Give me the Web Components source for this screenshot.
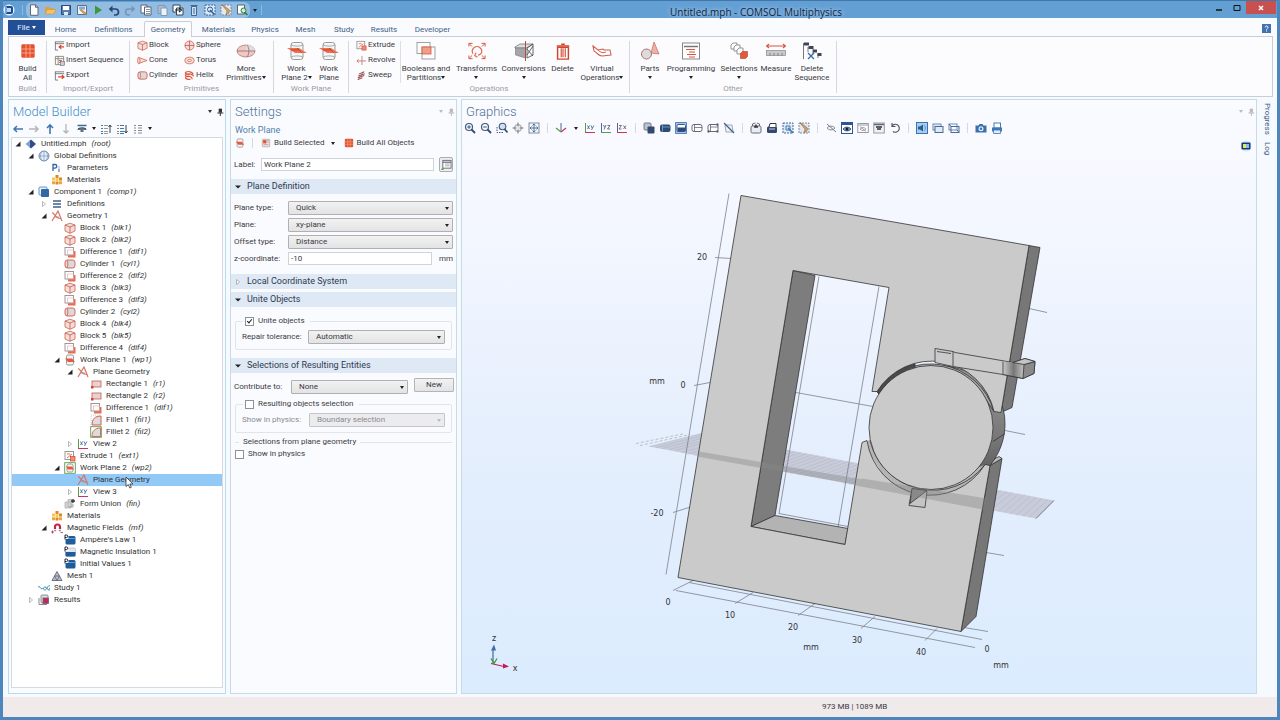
<!DOCTYPE html>
<html lang="en">
<head>
<meta charset="utf-8">
<title>Untitled.mph - COMSOL Multiphysics</title>
<style>
  html, body { height: 100%; }
  body { margin: 0; font: 8px/12px Roboto, "Noto Sans", sans-serif; color: #333; background: #f9fafe; overflow: hidden; }
</style>
</head>
<body>
<app-window></app-window>
<script>
/* ---------- icon library ---------- */
const ICONS = {
  logo: '<circle cx="6" cy="6" r="5.5" fill="#e8f1fb"/><rect x="2" y="2" width="8" height="8" rx="2" fill="#1c4b8c"/><rect x="4" y="4" width="4" height="4" fill="#bcd9f5"/><rect x="2" y="3" width="2" height="6" fill="#6fa6e0"/>',
  logo2: '<circle cx="6" cy="6" r="5.5" fill="#dfe6ef"/><rect x="1.5" y="2.500" width="9" height="7" rx="1" fill="#123a78"/><rect x="3" y="4" width="3" height="4" fill="#e8e35a"/><rect x="6" y="4" width="3" height="4" fill="#7fc3e8"/>',
  newdoc: '<path d="M2.500.8h5l2.500 2.500v8h-7.500z" fill="#fff" stroke="#667"/><path d="M7.500.8v2.500h2.500" fill="none" stroke="#667"/>',
  open: '<path d="M1 3h4l1 1h4v2H3L1 10z" fill="#e0a040"/><path d="M3.500 5.500H12L9.500 10H1z" fill="#f5c268" stroke="#c88a30" stroke-width=".5"/>',
  save: '<path d="M1.500 1.500h9v9h-9z" fill="#5b7fb5" stroke="#2a4a78"/><path d="M3 2h6v4H3z" fill="#fff"/><path d="M4 8h4v3H4z" fill="#dfe8f5"/>',
  saveas: '<path d="M1.500 1.500h9v9h-9z" fill="#eef3fa" stroke="#5a6f92"/><path d="M3 2.500h6v3H3z" fill="#8ea8cc"/><path d="M4 6l5 5 1.500-1.500-5-4z" fill="#e0a040" stroke="#7a5a20" stroke-width=".4"/>',
  run: '<path d="M3 1.500l7 4.500-7 4.500z" fill="#3a9a3a"/>',
  undo: '<path d="M2.500 5h5a3 3 0 0 1 0 6H6" fill="none" stroke="#26446e" stroke-width="1.600"/><path d="M4.500 1.500v7L.8 5z" fill="#26446e"/>',
  redo: '<path d="M9.500 5h-5a3 3 0 0 0 0 6H6" fill="none" stroke="#7b94b4" stroke-width="1.600"/><path d="M7.500 1.500v7L11.200 5z" fill="#7b94b4"/>',
  copy: '<path d="M1 1h6v8H1z" fill="#fff" stroke="#567"/><path d="M4.500 3h6.500v8H4.500z" fill="#fff" stroke="#567"/><path d="M6 5.500h4M6 7.500h4M6 9.500h4" stroke="#567" stroke-width=".7"/>',
  paste: '<path d="M2 1.500h7v8H2z" fill="#a8bdd4" stroke="#8098b4"/><path d="M5 4h6v7.500H5z" fill="#eef3f8" stroke="#8098b4"/>',
  dup: '<path d="M1 1h7v7H1z" fill="#fff" stroke="#345"/><path d="M4.500 4H11v7H4.500z" fill="#fff" stroke="#345"/><path d="M3 6h5M7 4l2.500 2L7 8" fill="none" stroke="#123" stroke-width="1.200"/>',
  del2: '<path d="M3.500 2.500h5v9h-5z" fill="#cfe0f2" stroke="#3f6796"/><path d="M2.500 1.500h7M6 4v6" stroke="#3f6796"/>',
  selbox: '<path d="M1 1h10v10H1z" fill="#dce9f7" stroke="#3f6796" stroke-dasharray="2 1"/><circle cx="6" cy="5.500" r="2.500" fill="none" stroke="#2a5a94"/><path d="M6 6l4.500 4.500" stroke="#2a5a94" stroke-width="1.500"/>',
  brush: '<path d="M1 1h10v10H1z" fill="#e3e8ee" stroke="#7a8da5" stroke-dasharray="2 1"/><path d="M2 1l5 6-1 4 3-2 .5-3L3 1z" fill="#d8a060" stroke="#7a5a30" stroke-width=".5"/>',
  find: '<path d="M1.500 1h7v9h-7z" fill="#fff" stroke="#567"/><circle cx="7.500" cy="6.500" r="2.500" fill="#cfe9cf" stroke="#2f7d3a"/><path d="M9 8.500l2.500 2.500" stroke="#2f7d3a" stroke-width="1.500"/>',
  help: '<rect width="12" height="12" fill="#3f72af"/><path d="M4.200 4.500c0-2.500 3.800-2.500 3.800 0 0 1.500-2 1.300-2 3M6 8.500v1.500" fill="none" stroke="#fff" stroke-width="1.300"/>',
  buildall: '<rect x="1" y="1" width="10" height="10" rx="1" fill="#e4512f"/><path d="M4.500 1v10M7.500 1v10M1 4.500h10M1 7.500h10" stroke="#fbb09a" stroke-width=".6"/>',
  buildsel: '<rect x="1.500" y="1.500" width="9" height="9" rx="1" fill="#f0e4e2" stroke="#9a8f90" stroke-width=".7"/><rect x="2.500" y="2.500" width="4" height="4" fill="#e4512f"/><path d="M7.500 3h2M7.500 5h2M3 8h6" stroke="#b99" stroke-width="1"/>',
  import: '<path d="M1 2h10M1.500 2v9h3M1 4h10" fill="none" stroke="#777"/><path d="M11 7.500H6M8 5.500L5.500 7.500 8 9.500" fill="none" stroke="#d8452a" stroke-width="1.200"/>',
  insert: '<path d="M1.500 1.500h9v9h-9zM1.500 4h9M4.500 1.500v9" fill="none" stroke="#887"/><path d="M5.500 6h3M5.500 8h3" stroke="#d8452a"/><rect x="7" y="7" width="4.500" height="4.500" fill="#c9ccd4" stroke="#667" stroke-width=".6"/>',
  export: '<path d="M1 2h10M1.500 2v9h3M1 4h10" fill="none" stroke="#777"/><path d="M4.500 7.500h6M8.500 5.500l2.500 2-2.500 2" fill="none" stroke="#d8452a" stroke-width="1.200"/>',
  block: '<path d="M1 3l5-1.800L11 3v6l-5 2.300L1 9z" fill="#f8dcd6" stroke="#d0604c" stroke-width=".8"/><path d="M1 3l5 2 5-2M6 5v6.300" fill="none" stroke="#b0605a" stroke-width=".8"/>',
  cone: '<path d="M1.500 2.500L11 6l-9.500 3.500z" fill="#f6dcd8" stroke="#d0604c" stroke-width=".8"/><ellipse cx="2" cy="6" rx="1.300" ry="3.500" fill="#f6dcd8" stroke="#d0604c" stroke-width=".8"/>',
  cylinder: '<rect x="1" y="2" width="10" height="8" rx="2.500" fill="#d9d9de" stroke="#d8553f" stroke-width=".9"/><path d="M3 2.200c1.200 2 1.200 5.600 0 7.600" fill="none" stroke="#d8553f" stroke-width=".8"/>',
  sphere: '<circle cx="6" cy="6" r="5" fill="#f3d8d5" stroke="#d0553f" stroke-width=".8"/><path d="M1 6h10M6 1v10" stroke="#c0504a" stroke-width=".8"/>',
  torus: '<ellipse cx="6" cy="6" rx="5" ry="3.600" fill="#f6dcd8" stroke="#d0553f" stroke-width=".8"/><ellipse cx="6" cy="6" rx="2" ry="1.100" fill="#fff" stroke="#d0553f" stroke-width=".8"/>',
  helix: '<path d="M2 2.500c3-2 7 0 8 2M2 5c3-2 8 0 8.500 2M2 7.500c3-2 7 0 7 2.500M2 2.500c-1.500 1 .5 2 3 2.500M2 5c-1.500 1 .5 2 3 2.500M2 7.500c-1.500 2 2 3 5 2.800" fill="none" stroke="#dc5a42" stroke-width="1.300"/>',
  moreprim: '<ellipse cx="10" cy="10" rx="9" ry="6" fill="#eec9c4" stroke="#a06560" stroke-width=".7"/><path d="M10 4h1c5 0 8 3 8 6H10z" fill="#dcdde2"/><path d="M1 10h18M11 4c2.500 3 2.500 9 0 12" fill="none" stroke="#a06560" stroke-width=".8"/>',
  workplane: '<rect x="4" y="1.500" width="12" height="17" rx="2.500" fill="#f6f6f7" stroke="#999"/><path d="M4 4c3 1.500 9 1.500 12 0M4 16c3-1.500 9-1.500 12 0" fill="none" stroke="#999" stroke-width=".8"/><path d="M0 7h12l8 5H8z" fill="#ef7050"/><path d="M4 9h8M10 7l5 5" fill="none" stroke="#b23f26" stroke-width=".8"/>',
  extrude: '<rect x="1" y="1.500" width="8.500" height="8" fill="#fff" stroke="#999"/><path d="M3 8l5-4M3 4h3" stroke="#e0735c"/><rect x="6.500" y="6.500" width="4.500" height="4.500" fill="#ee8d78" stroke="#d8452a" stroke-width=".7"/>',
  revolve: '<path d="M6.500 1v10" stroke="#999"/><path d="M1 6.500h10M3 4.500L1 6.500l2 2" fill="none" stroke="#e0735c"/>',
  sweep: '<path d="M2 11l6-9" stroke="#888" stroke-width="1"/><path d="M3 4.500l6-2.500M2.500 6.500l7-2.500M2 8.500l7-2.500M2 10.500l5-2" stroke="#a05050" stroke-width="1.100"/>',
  booleans: '<rect x="1" y="1.500" width="13" height="11" fill="#fff" stroke="#8a8a8a" stroke-width=".8"/><rect x="6" y="6" width="13" height="12" fill="none" stroke="#8a8a8a" stroke-width=".8"/><rect x="6" y="6" width="9" height="7" fill="#eea087" stroke="#d8553a" stroke-width=".8"/>',
  transforms: '<path d="M5.500 13a5.200 5.200 0 1 1 9 0M11 14.500a5 5 0 0 0 3.500-1.500M9 12l-1.500 3 3 2" fill="none" stroke="#e06a50" stroke-width="1.300"/><path d="M1 5V1.500h4M1.500 2l3 3M19 5V1.500h-4M18.500 2l-3 3M1 15v3.500h4M1.500 18l3-3M19 15v3.500h-4M18.500 18l-3-3" fill="none" stroke="#d8452a" stroke-width="1"/>',
  conversions: '<path d="M1 6l5-3h13l-6 4H1z" fill="#ddd" stroke="#666" stroke-width=".7"/><path d="M1.500 7h10v10l-10-3z" fill="#a5a5a8" stroke="#777" stroke-width=".6"/><path d="M13 7l6-4v11l-6 3zM13 8l6 7M13 14l6-9" fill="none" stroke="#444" stroke-width=".8"/><path d="M11.500 0v20" stroke="#b04a44" stroke-width="1"/>',
  trash: '<path d="M4 6h12v13H4z" fill="#fff" stroke="#d04428" stroke-width="1.600"/><path d="M3 4.500h14M8 2.500h4" stroke="#d04428" stroke-width="1.800"/><path d="M8 7v10M10 7v10M12.500 7v10" stroke="#d04428" stroke-width="1.200"/>',
  virtual: '<path d="M1 5l5 4 5-1 1 1h6l1 5-9 1c-4 0-4-3-8-5z" fill="#fff" stroke="#d0604c" stroke-width="1.100"/><path d="M6 9c3 3 5 3 8 2" fill="none" stroke="#d0604c"/>',
  parts: '<path d="M14 1l5 12-8-1z" fill="#eeb3a8" stroke="#c0655a" stroke-width=".7"/><circle cx="6.500" cy="13" r="5" fill="#dadce0" stroke="#b5605a" stroke-width=".9"/>',
  programming: '<rect x="1.500" y="2" width="17" height="16" fill="#fff" stroke="#888"/><path d="M3 5.500h14" stroke="#777" stroke-width="1.500"/><path d="M5 8.500h9M8 11h6M6 13.500h9M8 16h6" stroke="#d8553a" stroke-width="1"/>',
  selections: '<g fill="#fff" stroke="#888" stroke-width=".9"><path d="M2 4l2-2h4v4L6 8H2z"/><path d="M5 6l2-2h4v4l-2 2H5z"/><path d="M8 9l2-2h4v4l-2 2H8z"/></g><path d="M11.500 12.500l2-2h5v5l-2 2h-5z" fill="#e4583a" stroke="#b03a20" stroke-width=".6"/>',
  measure: '<path d="M0 5h20M3 3L.5 5 3 7M17 3l2.500 2L17 7" fill="none" stroke="#d8553a" stroke-width="1.100"/><rect x=".5" y="9.500" width="19" height="5" fill="#c9c9cc" stroke="#888" stroke-width=".7"/><path d="M4 12v2.500M8 12v2.500M12 12v2.500M16 12v2.500" stroke="#666" stroke-width=".7"/>',
  delseq: '<path d="M1.500 2v16M6 6v5M11 8v5M16 12v5" stroke="#777"/><path d="M2 1.500h5v3H2zM6.500 5h5v3h-5zM11 8.500h4v3h-4zM15.500 12h4v3h-4z" fill="#3d4654"/><path d="M6 12l6 6M12 12l-6 6" stroke="#3a6ea5" stroke-width="1.400"/>',
  left: '<path d="M11 6H2M5 3L2 6l3 3" fill="none" stroke="#3f78ae" stroke-width="1.500"/>',
  right: '<path d="M1 6h9M7 3l3 3-3 3" fill="none" stroke="#b5b5b8" stroke-width="1.500"/>',
  up: '<path d="M6 11V2M3 5l3-3 3 3" fill="none" stroke="#3f78ae" stroke-width="1.600"/>',
  down: '<path d="M6 1v9M3.500 7.500L6 10l2.500-2.500" fill="none" stroke="#b5b5b8" stroke-width="1.300"/>',
  show: '<path d="M1.500 2.500h9" stroke="#3f6796" stroke-width="1.500"/><path d="M2 6h8M4.500 8h3" stroke="#345" stroke-width="1.600"/><path d="M1.500 6.500C3 4 9 4 10.500 6.500" fill="none" stroke="#345" stroke-width=".8"/>',
  collapse: '<path d="M1 2.500h2M1 5.500h2M1 8.500h2M1 10.500h2" stroke="#3f78ae" stroke-width="1"/><path d="M4 2.500h4M4 5.500h4M4 8.500h4M4 10.500h4" stroke="#999"/><path d="M10 10V2M8.500 4L10 2l1.500 2" fill="none" stroke="#345"/>',
  expand: '<path d="M1 2.500h2M1 5.500h2M1 8.500h2M1 10.500h2" stroke="#888" stroke-width="1"/><path d="M4 2.500h4M4 5.500h4M4 8.500h4M4 10.500h4" stroke="#3f78ae"/><path d="M10 2v8M8.500 8l1.500 2 1.500-2" fill="none" stroke="#345"/>',
  list: '<path d="M2 2.500h2M2 5h2M2 7.500h2M2 10h2M6 2.500h4M6 5h4M6 7.500h4M6 10h4" stroke="#888" stroke-width="1.200"/>',
  pin: '<path d="M4 1h5v6H4z" fill="currentColor"/><path d="M2 7.500h9M6.500 7.500V12" stroke="currentColor" stroke-width="1.500"/>',
  root: '<path d="M1 6l5-4.500L11 6l-5 4.500z" fill="#2f4f86"/><path d="M1 6l4-3.500v7z" fill="#86a4cf"/>',
  globe: '<circle cx="6" cy="6" r="5" fill="#e4eef8" stroke="#4f7096" stroke-width=".8"/><path d="M1 6h10M6 1v10M4 1.500c-2 3-2 6 0 9M8 1.500c2 3 2 6 0 9" fill="none" stroke="#6f8fb2" stroke-width=".6"/>',
  params: '<path d="M2 9V2.500h2a1.800 1.800 0 0 1 0 3.600H2" fill="none" stroke="#2f62a8" stroke-width="1.300"/><path d="M8 6.500V10M8 4.500v1" stroke="#3a6fb0" stroke-width="1.100"/>',
  materials: '<path d="M4.500 1h3v3h-3zM8 3.500h3v3H8zM4.500 7.500h3v3h-3z" fill="#d98a22"/><path d="M1 3.500h3v3H1zM4.500 4.300h3v3h-3z" fill="#f8c65c"/><path d="M1 7.300h3v3H1zM8 7.300h3v3H8z" fill="#eda53a"/>',
  component: '<rect x="1" y="1" width="8" height="8" rx="1" fill="#e9f1f9" stroke="#6a93bd"/><rect x="3" y="3" width="8" height="8" rx="1" fill="#2f6aa6"/>',
  defs: '<path d="M2 3h8M2 6h8M2 9h8" stroke="#41608c" stroke-width="1.400"/>',
  geometry: '<path d="M1 11L7 1l4 10M1 2.500c3 1 3 6 9 6" fill="none" stroke="#dc7260" stroke-width="1.200"/><path d="M3 7h5" stroke="#999" stroke-width=".8"/>',
  difference: '<path d="M4 5h7.500v6.500H4z" fill="#ea6a50"/><rect x="1" y="1.500" width="8.500" height="7.500" fill="#fff" stroke="#909094" stroke-width=".9"/><rect x="3.500" y="4" width="6" height="5" fill="none" stroke="#e9a79a" stroke-width=".6"/>',
  wp: '<rect x="2.500" y="1" width="7" height="10" rx="1.500" fill="#f4f4f4" stroke="#999"/><path d="M1 4.500h7l3 3.500H4z" fill="#e45a40"/>',
  wpg: '<rect x=".7" y=".7" width="10.600" height="10.600" fill="#fff" stroke="#5c9a4a" stroke-width=".9"/><rect x="3" y="2" width="6" height="8" rx="1.500" fill="#f4f4f4" stroke="#999"/><path d="M2 4.500h6l2 3H4z" fill="#e45a40"/>',
  rect: '<rect x="2" y="3" width="9" height="6" fill="#f0cfca" stroke="#b5605a" stroke-width=".8"/><rect x="1" y="8" width="2.500" height="2.500" fill="#d8452a"/>',
  fillet: '<path d="M2 11C2 5 5 2 11 2v9z" fill="#dcdce0" stroke="#d0604c" stroke-width="1"/><path d="M1 11V1h10" fill="none" stroke="#ccc" stroke-dasharray="1 1"/>',
  filletg: '<rect x=".7" y=".7" width="10.600" height="10.600" fill="#fff" stroke="#5c9a4a" stroke-width=".9"/><path d="M2 10.500C2 5 5 2 10.500 2v8.500z" fill="#dcdce0" stroke="#d0604c" stroke-width=".9"/>',
  view: '<path d="M1.500 1v9.500" stroke="#5c9a4a"/><path d="M1 10.500h10" stroke="#c8365a"/><path d="M3.500 3.500l2 3.500M5.500 3.500l-2 3.500M7 3.500l1.200 2.500M9.800 3.500L7.500 8" stroke="#4a6a94" stroke-width=".9"/>',
  union: '<path d="M1 4h6v6H1zM4 1.500h4v7H4z" fill="#d5d5d8" stroke="#aaa" stroke-width=".7"/><path d="M9 1v4M7 3h4" stroke="#333" stroke-width="1.300"/><path d="M9 6v3H5" fill="none" stroke="#aaa"/>',
  magnet: '<path d="M4 7V5a2.500 2.500 0 0 1 5 0v2" fill="none" stroke="#c4244c" stroke-width="2.200"/><path d="M3 8.500h2.200M7.800 8.500H10" stroke="#99a" stroke-width="1.500"/><path d="M1.500 8.500v3M0 10h3M9.500 10.500H12" stroke="#c4244c" stroke-width=".8"/>',
  dom: '<rect x="1.500" y="2" width="10" height="8.500" rx="1.500" fill="#1f5c9c"/><path d="M5 4.500h6.500" stroke="#7fb0dc" stroke-width=".7"/><path d="M0 0h4.500v5H0z" fill="#fff"/><path d="M1 5.500V1h1.500a1.200 1.200 0 0 1 0 2.500H1" fill="none" stroke="#223" stroke-width="1"/>',
  bnd: '<rect x="1.500" y="2" width="10" height="8.500" rx="1.500" fill="#dfe6ee" stroke="#9fb0c4" stroke-width=".6"/><path d="M1.500 6H11.500v3a1.500 1.500 0 0 1-1.500 1.500H3A1.500 1.500 0 0 1 1.500 9z" fill="#1f5c9c"/><path d="M0 0h4.500v5H0z" fill="#fff"/><path d="M1 5.500V1h1.500a1.200 1.200 0 0 1 0 2.500H1" fill="none" stroke="#223" stroke-width="1"/>',
  mesh: '<path d="M6 1.500L11 10.500H1z" fill="#b9bcc8" stroke="#555a6c" stroke-width=".8"/><path d="M3.500 6h5L6 10.500z" fill="none" stroke="#555a6c" stroke-width=".7"/>',
  study: '<path d="M0 5c1-1 2 0 2.500 1s2 1 2.500 0M12 4c-2-2-3 4-5 4s-2-3 0-3 2 3 4 3 1-2 0-2" fill="none" stroke="#2f8aa6" stroke-width="1"/>',
  results: '<rect x="3" y="1" width="7" height="8" rx="1" fill="#ddd" stroke="#778" stroke-width=".8"/><rect x="5" y="4" width="5.500" height="5.500" fill="#c4285a" stroke="#667" stroke-width=".8"/><path d="M1 4v6.500h8" fill="none" stroke="#888"/>',
  zoomin: '<circle cx="5" cy="5" r="3.500" fill="#f4f7fb" stroke="#445a78" stroke-width="1.200"/><path d="M7.500 7.500L11 11" stroke="#33496a" stroke-width="1.800"/><path d="M3.200 5h3.600M5 3.200v3.600" stroke="#2f5a94"/>',
  zoomout: '<circle cx="5" cy="5" r="3.500" fill="#f4f7fb" stroke="#445a78" stroke-width="1.200"/><path d="M7.500 7.500L11 11" stroke="#33496a" stroke-width="1.800"/><path d="M3.200 5h3.600" stroke="#2f5a94"/>',
  zoombox: '<circle cx="6.500" cy="4.500" r="3.300" fill="#cfe0f2" stroke="#445a78" stroke-width="1.100"/><path d="M8.500 7l3 3.500" stroke="#33496a" stroke-width="1.700"/><path d="M1 5v5.500h7" fill="none" stroke="#445a78" stroke-dasharray="1.500 1"/>',
  zoomsel: '<circle cx="6" cy="6" r="3.500" fill="#eee" stroke="#999"/><path d="M6 .5v4M6 7.500v4M.5 6h4M7.500 6h4" stroke="#778"/>',
  extents: '<rect x="1" y="1" width="10" height="10" fill="#f4f7fb" stroke="#889"/><path d="M6 2v8M2 6h8M4.500 3.500L6 2l1.500 1.500M4.500 8.500L6 10l1.500-1.500M3.500 4.500L2 6l1.500 1.500M8.500 4.500L10 6 8.500 7.500" fill="none" stroke="#3f6796" stroke-width=".9"/>',
  axes: '<path d="M6 1v9" stroke="#4a6a94"/><path d="M6 10L1 6" stroke="#5c9a4a" stroke-width="1.300"/><path d="M6 10l5-4" stroke="#c8365a" stroke-width="1.300"/>',
  yz: '<path d="M1.500 1v9.500" stroke="#3f6fae"/><path d="M1 10.500h10" stroke="#5c9a4a"/><path d="M3.500 3l1.200 2.500M6 3L4 7.500M7.500 3.500H10L7.500 7H10" fill="none" stroke="#667" stroke-width=".9"/>',
  zx: '<path d="M1.500 1v9.500" stroke="#4a6a94"/><path d="M1 10.500h10" stroke="#c8365a"/><path d="M3 3.500h2.500L3 7h2.500M7.500 3.500L10 7M10 3.500L7.500 7" fill="none" stroke="#667" stroke-width=".9"/>',
  selobj: '<rect x="1" y="1" width="7" height="7" rx="1" fill="#b9c4d0" stroke="#778"/><rect x="4.500" y="4.500" width="7" height="7" rx="1" fill="#33496e"/>',
  seldom: '<rect x="1" y="2.500" width="10.500" height="7.500" rx="2" fill="#2c4a74"/><path d="M3.500 3v6.500M3.500 5h8" stroke="#8fb4dc" stroke-width=".7"/>',
  selbnd: '<rect width="12" height="12" fill="#a9c6ea"/><path d="M.5.500h11v11H.5z" fill="none" stroke="#5a83bd"/><rect x="2" y="2.500" width="8.500" height="7" rx="1" fill="#fff" stroke="#3a5a8a"/><path d="M2.500 5.500h8v4h-8z" fill="#2c4a74"/>',
  seledge: '<rect x="1" y="2.500" width="10" height="7" rx="2" fill="#fff" stroke="#667"/><path d="M3.500 3v6.500M3.500 5.500H11" stroke="#667" stroke-width=".8"/>',
  selpt: '<rect x="1" y="2.500" width="10" height="7" rx="2" fill="#fff" stroke="#667"/><path d="M3.500 3v6.500M3.500 5H11" stroke="#667" stroke-width=".8"/><path d="M9.500 1.500h2v2h-2zM9.500 8.500h2v2h-2zM.5 8.500h2v2h-2z" fill="#556"/>',
  selnone: '<path d="M2 3h7l1 7H3z" fill="#eef2f7" stroke="#9ab"/><path d="M1 1l10 10" stroke="#4a5f80" stroke-width="1.200"/>',
  clip: '<rect x="1" y="4" width="10" height="7" rx="1.500" fill="#e9edf3" stroke="#667"/><path d="M2.500 4V2l3-1M9.500 4V2L7 1" fill="none" stroke="#667"/><path d="M4 5h4M6 2.500v2" stroke="#334" stroke-width="1.500"/>',
  clipd: '<rect x="1" y="4.500" width="10" height="6.500" rx="1.500" fill="#33496e"/><path d="M3 5l1-3.500h6V5" fill="#fff" stroke="#334"/><path d="M3 7h6" stroke="#cdd8e8"/>',
  marq: '<rect x="1" y="1" width="10" height="10" fill="#dfeaf6" stroke="#3f6796" stroke-dasharray="2 1"/><path d="M4 4h4v4H4z" fill="none" stroke="#3f78ae"/><path d="M6 6l5 5" stroke="#3f78ae" stroke-width="1.600"/>',
  hide: '<path d="M2 6c2-2.500 6-2.500 8 0-2 2.500-6 2.500-8 0z" fill="none" stroke="#889"/><path d="M2 2l9 8" stroke="#778"/>',
  showon: '<rect width="12" height="12" fill="#2d5596"/><rect x="1" y="3" width="10" height="8" fill="#fff"/><path d="M2 7c2-2.500 6-2.500 8 0-2 2.500-6 2.500-8 0z" fill="#8ea8cc" stroke="#234" stroke-width=".8"/><circle cx="6" cy="7" r="1.500" fill="#123"/>',
  hide2: '<rect x=".8" y="1.500" width="10.500" height="9" fill="#fff" stroke="#99a"/><path d="M1 3h10" stroke="#99a"/><path d="M3 7c2-2 4-2 6 0-2 2-4 2-6 0zM3 4.500l6 5" fill="none" stroke="#889" stroke-width=".8"/>',
  show2: '<rect x=".8" y="1" width="10.500" height="10" fill="#eef2f0" stroke="#99a"/><path d="M1 2.500h10" stroke="#667" stroke-width="1.500"/><path d="M3 5h6M4 7h4" stroke="#234" stroke-width="1.300"/>',
  reset: '<path d="M3 4a4 4 0 1 1 1 5.500M3 1v3.500h3.500" fill="none" stroke="#556" stroke-width="1.200"/>',
  light: '<rect width="12" height="12" fill="#3f72b0"/><rect x="1" y="1" width="10" height="10" fill="#a9cdee"/><path d="M2 4.500h2l3-2v7l-3-2H2z" fill="#2a5a94"/><path d="M8 3c2 2 2 4 0 6" fill="none" stroke="#5f93cc"/>',
  transp: '<rect x="1" y="2" width="8" height="6" fill="#dfeaf6" stroke="#6a8ab4"/><rect x="3" y="4.500" width="8" height="6" fill="#dfeaf6" stroke="#4a6a94"/>',
  wire: '<rect x="1" y="2" width="8" height="6" fill="none" stroke="#6a8ab4"/><rect x="3" y="4.500" width="8" height="6" fill="none" stroke="#4a6a94"/><path d="M1 2l2 2.500M9 8l2 2.500" stroke="#4a6a94"/>',
  camera: '<path d="M.5 3.500h3L4.500 2h3l1 1.500h3v7H.5z" fill="#3a70ad"/><circle cx="6" cy="6.800" r="2.500" fill="#dfeaf6"/><circle cx="6" cy="6.800" r="1.200" fill="#3a70ad"/>',
  printer: '<rect x="3" y="1" width="6.500" height="5" fill="#fff" stroke="#4a7ab0"/><path d="M1 5.500h10v4H1z" fill="#3a78b5"/><path d="M2.500 8h7v3.500h-7z" fill="#dfeaf6" stroke="#3a78b5" stroke-width=".8"/>',
  rename: '<rect x="2" y="1.500" width="9" height="8.500" fill="#fff" stroke="#667"/><path d="M2 3.500h9" stroke="#667" stroke-width="1.300"/><path d="M4.500 5.500h5M4.500 7.500h5" stroke="#889" stroke-width=".8"/><path d="M.5 11.500l2.500-1" stroke="#3a9a3a" stroke-width="1.500"/>'
};
const BIG = new Set(['moreprim','workplane','booleans','transforms','conversions','trash','virtual','parts','programming','selections','measure','delseq']);

/* Registers an element whose shadow root is cloned from a template. */
function element(tag, markup) {
  const t = document.createElement('template');
  if (typeof markup === 'string') t.innerHTML = markup;
  customElements.define(tag, class extends HTMLElement {
    connectedCallback() {
      if (this.shadowRoot) return;
      const root = this.attachShadow({ mode: 'open' });
      if (typeof markup === 'function') root.innerHTML = markup(this);
      else root.append(t.content.cloneNode(true));
    }
  });
}

element('app-icon', el => {
  const n = el.getAttribute('name'), box = BIG.has(n) ? 20 : 12;
  return `<style>:host{display:inline-block;flex:none;width:12px;height:12px}svg{display:block;width:100%;height:100%}</style>
  <svg viewBox="0 0 ${box} ${box}" aria-hidden="true">${ICONS[n] || ''}</svg>`;
});

element('drop-arrow', `<style>:host{display:inline-block;flex:none;width:0;height:0;border:2px solid transparent;border-top:3px solid #222;border-bottom:0}</style>`);
element('tool-sep', `<style>:host{display:block;flex:none;width:11px;height:12px}i{display:block;width:1px;height:10px;margin:1px 5px;background:var(--sep,#d5d9e2)}</style><i></i>`);

element('icon-button', el => `<style>:host{display:block;flex:none}
  button{all:unset;display:flex;align-items:center;justify-content:center;width:16px;height:16px}
  app-icon{width:12px;height:12px}</style>
  <button type="button" aria-label="${el.getAttribute('label') || el.getAttribute('icon')}"><app-icon name="${el.getAttribute('icon')}"></app-icon></button>`);

const strip = names => names.split(' ').map(n =>
  n === '|' ? '<tool-sep></tool-sep>' : n === 'v' ? '<span class="dv"><drop-arrow></drop-arrow></span>' : `<icon-button icon="${n}"></icon-button>`).join('');

/* ---------- title bar ---------- */
element('title-bar', `<style>
  :host{display:grid;grid-template-columns:1fr auto 1fr;height:18px;flex:none;background:#649fd4;border-top:1px solid #3f77ab;box-sizing:border-box;--sep:#8fb9de}
  .qat{display:flex;align-items:center;height:18px}
  .qat > icon-button{margin-left:-2px}
  .qat > tool-sep{width:9px}
  .qat span{width:9px;display:flex;justify-content:center}
  .qat div{display:flex;background:rgba(255,255,255,.3);border-radius:6px}
  h1{margin:0;font:400 10px/23px "Open Sans","Noto Sans",sans-serif;color:#12263c;height:17px;padding:0 4px;text-shadow:0 0 4px #cfe3f5;position:relative;left:116px}
  .win{display:flex;justify-content:flex-end;padding-right:1px}
  .win button{all:unset;width:18px;height:13px;display:flex;align-items:center;justify-content:center}
  .win .x{width:30px;background:#c8504f}
  svg{width:8px;height:8px}
</style>
<div class="qat"><icon-button icon="logo" label="COMSOL"></icon-button><tool-sep></tool-sep>
<div>${strip('newdoc open save saveas run undo redo copy paste dup del2 selbox brush find')}</div><span><drop-arrow></drop-arrow></span><tool-sep style="margin-left:-3px"></tool-sep></div>
<h1>Untitled.mph - COMSOL Multiphysics</h1>
<div class="win">
<button type="button" aria-label="Minimize"><svg viewBox="0 0 8 8"><path d="M1 6h6" stroke="#111" stroke-width="1.500"/></svg></button>
<button type="button" aria-label="Maximize"><svg viewBox="0 0 8 8"><path d="M1 1.500h6v5H1z" fill="none" stroke="#111"/></svg></button>
<button type="button" class="x" aria-label="Close"><svg viewBox="0 0 8 8"><path d="M2 2l4 4M6 2L2 6" stroke="#fff" stroke-width="1.500"/></svg></button></div>`);

/* ---------- ribbon ---------- */
element('ribbon-tabs', `<style>
  :host{display:flex;flex:none;height:19px;padding:0 5px 0 5px;align-items:flex-end;margin-bottom:-1px;position:relative}
  button{all:unset;box-sizing:border-box;height:16px;line-height:17px;text-align:center;color:#44607f;flex:none}
  .file{background:#234f96;color:#e9f0fa;width:37px;margin:0 3px 2px 0;height:15px;line-height:15px}
  .file drop-arrow{border-top-color:#fff;vertical-align:middle}
  [aria-selected=true]{background:#fdfdff;border:1px solid #c9cdd6;border-bottom:0;border-radius:2px 2px 0 0;line-height:15px}
  .help{margin:0 0 3px auto;width:10px;height:11px;display:flex;align-items:center}
  .help app-icon{width:9px;height:9px}
</style>
<button type="button" class="file">File <drop-arrow></drop-arrow></button>
<button type="button" role="tab" style="width:35px">Home</button><button type="button" role="tab" style="width:61px">Definitions</button><button type="button" role="tab" aria-selected="true" style="width:48px">Geometry</button><button type="button" role="tab" style="width:53px">Materials</button><button type="button" role="tab" style="width:40px">Physics</button><button type="button" role="tab" style="width:41px">Mesh</button><button type="button" role="tab" style="width:36px">Study</button><button type="button" role="tab" style="width:44px">Results</button><button type="button" role="tab" style="width:53px">Developer</button>
<button type="button" class="help" aria-label="Help"><app-icon name="help"></app-icon></button>`);

element('ribbon-group', el => `<style>
  :host{display:flex;flex:none;flex-direction:column;box-sizing:border-box;border-right:1px solid #d5d9df;margin:4px 0 3px}
  .body{display:flex;height:42px}
  .cap{height:10px;line-height:12px;text-align:center;color:#9a9a9e}
</style><div class="body"><slot></slot></div><div class="cap">${el.getAttribute('caption')}</div>`);

element('ribbon-button', el => `<style>
  :host{display:block;flex:none}
  button{all:unset;display:flex;flex-direction:column;align-items:center;width:100%;text-align:center;line-height:9px;color:#3a3a3e;white-space:nowrap}
  app-icon{width:${el.getAttribute('size') || 20}px;height:20px;margin-bottom:3px}
</style><button type="button"><app-icon name="${el.getAttribute('icon')}"></app-icon><span><slot></slot></span></button>`);

element('ribbon-item', el => `<style>
  :host{display:block}
  button{all:unset;display:flex;align-items:center;height:14px;gap:1px;color:#3a3a3e;white-space:nowrap}
  app-icon{width:11px;height:11px}
</style><button type="button"><app-icon name="${el.getAttribute('icon')}"></app-icon><span><slot></slot></span></button>`);

element('ribbon-bar', `<style>
  :host{display:flex;flex:none;height:61px;box-sizing:border-box;border:1px solid #c9cdd6;margin:0 4px 0 5px;background:#fcfcff}
  .col{display:flex;flex-direction:column;gap:1px;margin-top:-3px}
  .in{width:1px;background:#dcdfe5;margin:0 0 0 4px}
  drop-arrow{vertical-align:middle;margin:0 0 0 3px}
  br + drop-arrow{margin:0}
</style>
<ribbon-group caption="Build" style="width:38px"><ribbon-button icon="buildall" size="16" style="width:37px">Build<br>All</ribbon-button></ribbon-group>
<ribbon-group caption="Import/Export" style="width:83px"><div class="col" style="margin-left:7px"><ribbon-item icon="import">Import</ribbon-item><ribbon-item icon="insert">Insert Sequence</ribbon-item><ribbon-item icon="export">Export</ribbon-item></div></ribbon-group>
<ribbon-group caption="Primitives" style="width:144px"><div class="col" style="margin-left:7px;width:47px"><ribbon-item icon="block">Block</ribbon-item><ribbon-item icon="cone">Cone</ribbon-item><ribbon-item icon="cylinder">Cylinder</ribbon-item></div><div class="col" style="width:38px"><ribbon-item icon="sphere">Sphere</ribbon-item><ribbon-item icon="torus">Torus</ribbon-item><ribbon-item icon="helix">Helix</ribbon-item></div><ribbon-button icon="moreprim" style="width:48px">More<br>Primitives<drop-arrow></drop-arrow></ribbon-button></ribbon-group>
<ribbon-group caption="Work Plane" style="width:75px"><ribbon-button icon="workplane" style="width:45px">Work<br>Plane 2<drop-arrow></drop-arrow></ribbon-button><ribbon-button icon="workplane" style="width:20px">Work<br>Plane</ribbon-button></ribbon-group>
<ribbon-group caption="Operations" style="width:281px"><div class="col" style="margin-left:7px;width:40px"><ribbon-item icon="extrude">Extrude</ribbon-item><ribbon-item icon="revolve">Revolve</ribbon-item><ribbon-item icon="sweep">Sweep</ribbon-item></div><div class="in"></div><ribbon-button icon="booleans" style="width:50px">Booleans and<br>Partitions<drop-arrow></drop-arrow></ribbon-button><ribbon-button icon="transforms" size="18" style="width:51px">Transforms<br><drop-arrow></drop-arrow></ribbon-button><ribbon-button icon="conversions" style="width:43px">Conversions<br><drop-arrow></drop-arrow></ribbon-button><ribbon-button icon="trash" size="18" style="width:35px">Delete</ribbon-button><ribbon-button icon="virtual" size="22" style="width:44px">Virtual<br>Operations<drop-arrow></drop-arrow></ribbon-button></ribbon-group>
<ribbon-group caption="Other" style="width:207px"><ribbon-button icon="parts" style="width:28px;margin-left:6px">Parts<br><drop-arrow></drop-arrow></ribbon-button><ribbon-button icon="programming" style="width:54px">Programming<br><drop-arrow></drop-arrow></ribbon-button><ribbon-button icon="selections" style="width:42px">Selections<br><drop-arrow></drop-arrow></ribbon-button><ribbon-button icon="measure" style="width:32px">Measure</ribbon-button><ribbon-button icon="delseq" style="width:40px">Delete<br>Sequence</ribbon-button></ribbon-group>`);

/* ---------- docked panel ---------- */
element('dock-panel', el => `<style>
  :host{display:flex;flex-direction:column;box-sizing:border-box;border:1px solid var(--edge,#c5dbe8);min-height:0;background:#fafbff}
  header{display:flex;align-items:center;height:20px;padding:4px 1px 0 4px;box-sizing:border-box;flex:none;color:${el.hasAttribute('active') ? '#333' : '#bbb'}}
  h2{margin:0 auto 0 0;font:300 13px/16px Roboto,sans-serif;color:var(--title,#4f7396)}
  app-icon{width:8px;height:8px;margin:-1px 0 0 4px}
  drop-arrow{border-top-color:currentColor;margin-top:-2px}
</style><header><h2>${el.getAttribute('heading')}</h2><drop-arrow></drop-arrow><app-icon name="pin"></app-icon></header><slot></slot>`);

/* ---------- model tree ---------- */
/* depth, state (o open, c closed, s selected, - leaf), icon, label|tag */
const TREE = `0 o root Untitled.mph|root
1 o globe Global Definitions
2 - params Parameters
2 - materials Materials
1 o component Component 1|comp1
2 c defs Definitions
2 o geometry Geometry 1
3 - block Block 1|blk1
3 - block Block 2|blk2
3 - difference Difference 1|dif1
3 - cylinder Cylinder 1|cyl1
3 - difference Difference 2|dif2
3 - block Block 3|blk3
3 - difference Difference 3|dif3
3 - cylinder Cylinder 2|cyl2
3 - block Block 4|blk4
3 - block Block 5|blk5
3 - difference Difference 4|dif4
3 o wp Work Plane 1|wp1
4 o geometry Plane Geometry
5 - rect Rectangle 1|r1
5 - rect Rectangle 2|r2
5 - difference Difference 1|dif1
5 - fillet Fillet 1|fil1
5 - filletg Fillet 2|fil2
4 c view View 2
3 - extrude Extrude 1|ext1
3 o wpg Work Plane 2|wp2
4 s geometry Plane Geometry
4 c view View 3
3 - union Form Union|fin
2 - materials Materials
2 o magnet Magnetic Fields|mf
3 - dom Ampère's Law 1
3 - bnd Magnetic Insulation 1
3 - dom Initial Values 1
2 - mesh Mesh 1
1 - study Study 1
1 c results Results`.split('\n');

element('model-tree', () => `<style>
  :host{display:block;flex:1;min-height:0;margin:0 2px 5px;border:1px solid #d3dae2;background:#fff}
  ul{margin:0;padding:0;list-style:none}
  li{display:flex;align-items:center;height:12px;white-space:nowrap;position:relative}
  li[aria-selected]{background:#91c9f7}
  .t{width:12px;flex:none;display:flex;justify-content:center}
  .t svg{width:6px;height:6px}
  app-icon{width:12px;height:12px;margin:0 4px 0 1px}
  i{margin-left:5px}
  .cur{position:absolute;left:113px;top:2px;width:9px;height:13px;z-index:1}
</style><ul role="tree">${TREE.map(r => {
  const [, d, s, ic, txt] = r.match(/^(\d) (\S) (\S+) (.*)$/);
  const [name, tag] = txt.split('|');
  const tw = s === 'o' ? '<svg viewBox="0 0 6 6"><path d="M5.500.5v5h-5z" fill="#222"/></svg>' : s === 'c' ? '<svg viewBox="0 0 6 6"><path d="M1.500.5l3 2.500-3 2.500z" fill="#fff" stroke="#999" stroke-width=".7"/></svg>' : '';
  return `<li role="treeitem" style="padding-left:${d * 13}px"${s === 's' ? ' aria-selected="true"' : ''}><span class="t">${tw}</span><app-icon name="${ic}"></app-icon><span>${name}</span>${tag ? `<i>(${tag})</i>` : ''}${s === 's' ? '<svg class="cur" viewBox="0 0 9 13"><path d="M1 1v9.500l2.300-2 1.500 3.500 1.500-.7-1.500-3.300H8z" fill="#fff" stroke="#333" stroke-width=".8"/></svg>' : ''}</li>`;
}).join('')}</ul>`);

/* ---------- settings ---------- */
element('form-section', el => `<style>
  :host{display:block}
  h3{margin:0;display:flex;align-items:center;height:15px;padding-left:4px;font:400 9px/15px Roboto,sans-serif;color:#2e3b4d;background:#dfe8f5}
  span{width:12px;display:flex}
  svg{width:6px;height:6px}
</style><h3><span><svg viewBox="0 0 6 6">${el.hasAttribute('closed') ? '<path d="M1.500.5l3 2.500-3 2.500z" fill="#fff" stroke="#999" stroke-width=".7"/>' : '<path d="M0 1.500h6L3 4.500z" fill="#222"/>'}</svg></span>${el.getAttribute('heading')}</h3><slot></slot>`);

element('drop-down', el => `<style>
  :host{display:block;position:relative;height:14px;flex:none}
  select{appearance:none;width:100%;height:14px;box-sizing:border-box;font:inherit;line-height:12px;color:inherit;padding:0 7px;border:1px solid #b0b0b4;border-radius:1px;background:linear-gradient(#f2f2f2,#e3e3e5);display:block;opacity:1}
  drop-arrow{position:absolute;right:4px;top:6px}
  :host([disabled]) select{color:#8a8a8e;border-color:#c6c6ca;background:#ececee}
  :host([disabled]) drop-arrow{border-top-color:#bbb}
</style><select aria-label="${el.getAttribute('label')}"${el.hasAttribute('disabled') ? ' disabled' : ''}><option>${el.getAttribute('value')}</option></select><drop-arrow></drop-arrow>`);

element('settings-form', `<style>
  :host{display:block;flex:1;min-height:0;color:#3a3a3e}
  .sub{color:#4f7fae;font-size:9px;line-height:12px;padding:4px 0 0 4px}
  .bar{display:flex;align-items:center;height:14px;padding-left:2px}
  .bar button{all:unset;display:flex;align-items:center;gap:3px}
  .bar app-icon{width:10px;height:10px}
  .row{display:flex;align-items:center;height:17px;padding:0 3px}
  .row > span, .row > label{width:54px;flex:none;white-space:nowrap}
  drop-down.g{flex:1}
  input[type=text]{box-sizing:border-box;height:13px;min-width:0;flex:1;border:1px solid #cfd3da;background:#fff;font:inherit;color:inherit;padding:0 2px}
  .ed{all:unset;width:12px;height:13px;border:1px solid #a9adb3;border-radius:2px;background:#eee;margin-left:5px;display:flex;align-items:center;justify-content:center}
  .ed app-icon{width:11px;height:11px}
  fieldset{margin:0 4px;border:1px solid #e2e4ea;border-radius:2px;padding:0 6px;min-width:0}
  legend{display:flex;align-items:center;height:12px;padding:0 5px 0 2px;margin-left:1px}
  legend label,.chk label{margin-left:4px}
  input[type=checkbox]{appearance:none;margin:0;width:9px;height:9px;border:1px solid #8e9298;background:#fff;box-sizing:border-box;position:relative}
  input[type=checkbox]:checked::after{content:"";position:absolute;left:2px;top:0;width:2px;height:4px;border:solid #222;border-width:0 1px 1px 0;transform:rotate(40deg)}
  .new{all:unset;box-sizing:border-box;width:40px;height:14px;border:1px solid #b5b5b9;border-radius:1px;background:linear-gradient(#f2f2f2,#e3e3e5);text-align:center;line-height:12px;margin:-4px -1px 0 6px}
  .line{display:flex;align-items:center;height:12px;gap:4px;padding-left:4px}
  .line::before,.line::after{content:"";height:1px;background:#e2e4ea;width:4px}
  .line::after{flex:1;margin-right:4px}
  .chk{display:flex;align-items:center;height:12px;padding-left:4px}
</style>
<div class="sub">Work Plane</div>
<div class="bar"><button type="button" aria-label="Work plane"><app-icon name="wp" style="width:14px"></app-icon></button><tool-sep></tool-sep>
<button type="button" style="margin-left:3px"><app-icon name="buildsel"></app-icon>Build Selected<drop-arrow style="margin-left:3px"></drop-arrow></button><button type="button" style="margin-left:9px"><app-icon name="buildall"></app-icon>Build All Objects</button></div>
<div class="row" style="height:15px;margin:7px 0"><label for="lab" style="width:27px">Label:</label><input type="text" id="lab" value="Work Plane 2"><button type="button" class="ed" aria-label="Edit name"><app-icon name="rename"></app-icon></button></div>
<form-section heading="Plane Definition"><div style="padding:5px 0 7px">
<div class="row"><span>Plane type:</span><drop-down class="g" label="Plane type" value="Quick"></drop-down></div>
<div class="row"><span>Plane:</span><drop-down class="g" label="Plane" value="xy-plane"></drop-down></div>
<div class="row"><span>Offset type:</span><drop-down class="g" label="Offset type" value="Distance"></drop-down></div>
<div class="row"><label for="zc">z-coordinate:</label><input type="text" id="zc" value="-10"><span style="width:21px;text-align:right">mm</span></div></div></form-section>
<form-section closed heading="Local Coordinate System" style="margin-bottom:3px"></form-section>
<form-section heading="Unite Objects"><div style="padding:8px 0 8px">
<fieldset><legend><input type="checkbox" id="uo" checked><label for="uo">Unite objects</label></legend>
<div class="row" style="height:19px;padding:0 0 3px"><span style="width:66px">Repair tolerance:</span><drop-down class="g" label="Repair tolerance" value="Automatic"></drop-down></div></fieldset></div></form-section>
<form-section heading="Selections of Resulting Entities"><div style="padding-top:4px">
<div class="row" style="height:19px"><span style="width:57px">Contribute to:</span><drop-down class="g" label="Contribute to" value="None"></drop-down><button type="button" class="new">New</button></div>
<fieldset style="margin-top:2px"><legend><input type="checkbox" id="ro"><label for="ro">Resulting objects selection</label></legend>
<div class="row" style="height:19px;padding:0 0 3px;color:#8a8a8e"><span style="width:67px">Show in physics:</span><drop-down class="g" disabled label="Show in physics" value="Boundary selection"></drop-down></div></fieldset>
<div class="line" style="margin-top:3px">Selections from plane geometry</div>
<div class="chk"><input type="checkbox" id="sp"><label for="sp">Show in physics</label></div></div></form-section>`);

/* ---------- graphics ---------- */
const seg = s => `<path d="${s}" fill="none" stroke="#7b828c" stroke-width=".8"/>`;
const lbl = (x, y, t) => `<text x="${x}" y="${y}">${t}</text>`;
const hatch = Array.from({ length: 60 }, (_, i) => {
  const t = i / 60;
  return `M${(701 + 353 * t).toFixed(0)} ${(434 + 67 * t).toFixed(0)}l${(-52 + 34 * t).toFixed(0)} ${(13 + 5 * t).toFixed(0)}`;
}).join('');

element('graphics-view', `<style>
  :host{display:block;flex:1;min-height:0;position:relative}
  svg{display:block;width:100%;height:100%}
  text{font:8px "DejaVu Sans",sans-serif;fill:#333;text-anchor:middle}
  app-icon{position:absolute;right:4px;top:4px;width:12px;height:12px}
</style>
<svg viewBox="462 137 794 556" preserveAspectRatio="xMidYMid meet" role="img" aria-label="Geometry">
<defs><linearGradient id="cl"><stop offset="0" stop-color="#ccc"/><stop offset=".5" stop-color="#777"/><stop offset="1" stop-color="#c4c4c4"/></linearGradient>
<linearGradient id="cs" x1="0" y1="0" x2="0" y2="1"><stop offset="0" stop-color="#999"/><stop offset=".6" stop-color="#777"/><stop offset="1" stop-color="#555"/></linearGradient></defs>
<path d="M649 447L701 434L1054 501L1036 519Z" fill="#c3c6d3" fill-opacity=".85"/>
<path d="${hatch}" stroke="#a9acba" stroke-width=".6" opacity=".6"/>
<path d="M1054 501L1036 519" stroke="#777"/>
<path d="M636 444L685 434M640 446L690 435" stroke="#a5aab5" stroke-dasharray="3 2" stroke-width=".7"/>
${seg('M729 194L666 575M715 258L731 259M694 386L710 383M673 513L689 508')}
${seg('M676 591L975 648M689 583L982 640M964 628L988 632M673 591L693 581M735 604L753 593M798 616L815 604M861 629L875 617M925 641L937 629')}
${seg('M1029 309L1047 313M1005 431L1025 435M986 553L1004 556')}
${seg('M819 277L779 514L848 527M879 287L838 528M796 393L873 407')}
<g stroke="#333" stroke-width=".8" stroke-linejoin="round">
<path d="M793 271L815 276L775 516L751 527Z" fill="#7d7d7d"/>
<path d="M751 527L775 516L848 529L845 545Z" fill="#b3b3b3"/>
<path d="M1029 246L1040 248L1012 408L1001 413Z" fill="#777"/>
<path d="M990 466L1002 459L976 617L961 632Z" fill="#777"/>
<path d="M984 465L999 457L1002 459L990 466Z" fill="#bbb"/>
<path d="M931 366C965 364 1005 384 1005 424C1005 450 990 474 962 488Z" fill="url(#cs)"/>
<path d="M993 442L1005 434" fill="none"/>
<path d="M877 392A66 66 0 0 1 994 412L986 400A62 62 0 0 0 880 396Z" fill="#aaa"/>
<path d="M877 392A66 66 0 0 1 915 364L915 369L880 396Z" fill="#4a4a4a"/>
<path d="M862 443L872 440L900 470L930 486L965 474L985 465L960 500L900 500Z" fill="#b5b5b5" stroke="none"/>
<path d="M741 196L1029 246L1001 413L994 412A64 64 0 0 0 877 392L872 392L889 288L793 271L751 527L845 545L862 443L867 441A64 64 0 0 0 985 465L990 466L961 632L678 578Z" fill="#cacaca"/>
<path d="M870 441A65 65 0 0 0 985 465" fill="none"/>
<ellipse cx="931" cy="428" rx="62" ry="62" fill="#cacaca"/>
<path d="M912 489L909 506L925 508L927 492Z" fill="#c4c4c4"/>
<path d="M912 489L927 491L910 504Z" fill="#8a8a8a"/>
<path d="M935 349L953 352L955 353L1013 363L1025 359L1035 362L1034 374L1023 379L1003 375L953 367L935 363Z" fill="#cacaca"/>
<path d="M1003 362L1013 363L1024 365L1023 379L1003 375Z" fill="url(#cl)" stroke="none"/>
<path d="M1024 365L1035 362L1034 374L1023 379Z" fill="#8a8a8a"/>
<path d="M1013 363L1025 359L1035 362L1024 365Z" fill="#c4c4c4"/>
<path d="M953 352L953 367M1003 362V375L1023 379M937 352L951 354" fill="none"/>
</g>
<path d="M699 452L863 480L860 486L697 457ZM862 479L987 499L983 510L856 486Z" fill="#888" fill-opacity=".4"/>
<path d="M493 664L493 650" stroke="#3a6ea5" stroke-width="1.200"/><path d="M491 651h5L494 645z" fill="#3a6ea5"/>
<path d="M491 664L504 667" stroke="#c8185a" stroke-width="1.200"/><path d="M503 664v5l6-2z" fill="#c8185a"/>
<path d="M491 659l3 5 3-5" fill="none" stroke="#3a9a3a" stroke-width="1.300"/>
${lbl(702, 260, '20')}${lbl(657, 384, 'mm')}${lbl(683, 388, '0')}${lbl(657, 516, '-20')}${lbl(668, 605, '0')}${lbl(730, 618, '10')}${lbl(793, 630, '20')}${lbl(811, 650, 'mm')}${lbl(857, 643, '30')}${lbl(921, 655, '40')}${lbl(987, 652, '0')}${lbl(1001, 668, 'mm')}${lbl(494, 641, 'z')}${lbl(515, 671, 'x')}
</svg><app-icon name="logo2"></app-icon>`);

element('status-bar', `<style>:host{display:flex;flex:none;height:20px;align-items:center;background:#f0eaea;padding-left:819px;color:#3a3a3e}</style>973 MB | 1089 MB`);

/* ---------- window ---------- */
element('app-window', `<style>
  :host{display:flex;flex-direction:column;height:100vh;box-sizing:border-box;border:solid #4c86bd;border-width:0 3px 3px;background:#f9fbff}
  main{display:flex;flex:1;min-height:0;padding:2px 0 3px 5px;gap:4px;background:#f6f9fd}
  .mb{width:218px;--title:#3f8fc9;--edge:#b4dcec}
  .st{width:227px}
  .gr{flex:1;min-width:0;background:linear-gradient(#fafbff,#f2f6ff 25%,#e4eefd 60%,#dbecfe)}
  .strip{display:flex;align-items:center;height:16px;flex:none}
  .mb .strip{height:17px;padding-left:1px}
  .dv{width:8px;display:flex;justify-content:center;flex:none}
  .gr .dv{width:13px}
  aside{width:16px;display:flex;flex-direction:column;gap:7px;padding-top:4px;align-items:flex-start}
  aside button{all:unset;writing-mode:vertical-rl;color:#3d5f8a;line-height:12px}
</style>
<title-bar></title-bar><ribbon-tabs></ribbon-tabs><ribbon-bar></ribbon-bar>
<main>
<dock-panel class="mb" active heading="Model Builder"><div class="strip">${strip('left right up down show v collapse expand list v')}</div><model-tree></model-tree></dock-panel>
<dock-panel class="st" heading="Settings"><settings-form></settings-form></dock-panel>
<dock-panel class="gr" heading="Graphics"><div class="strip">${strip('zoomin zoomout zoombox zoomsel extents | axes v view yz zx | selobj seldom selbnd seledge selpt selnone | clip clipd marq brush | hide showon hide2 show2 reset | light transp wire | camera printer')}</div><graphics-view></graphics-view></dock-panel>
<aside><button type="button">Progress</button><button type="button">Log</button></aside>
</main>
<status-bar></status-bar>`);
</script>
</body>
</html>
